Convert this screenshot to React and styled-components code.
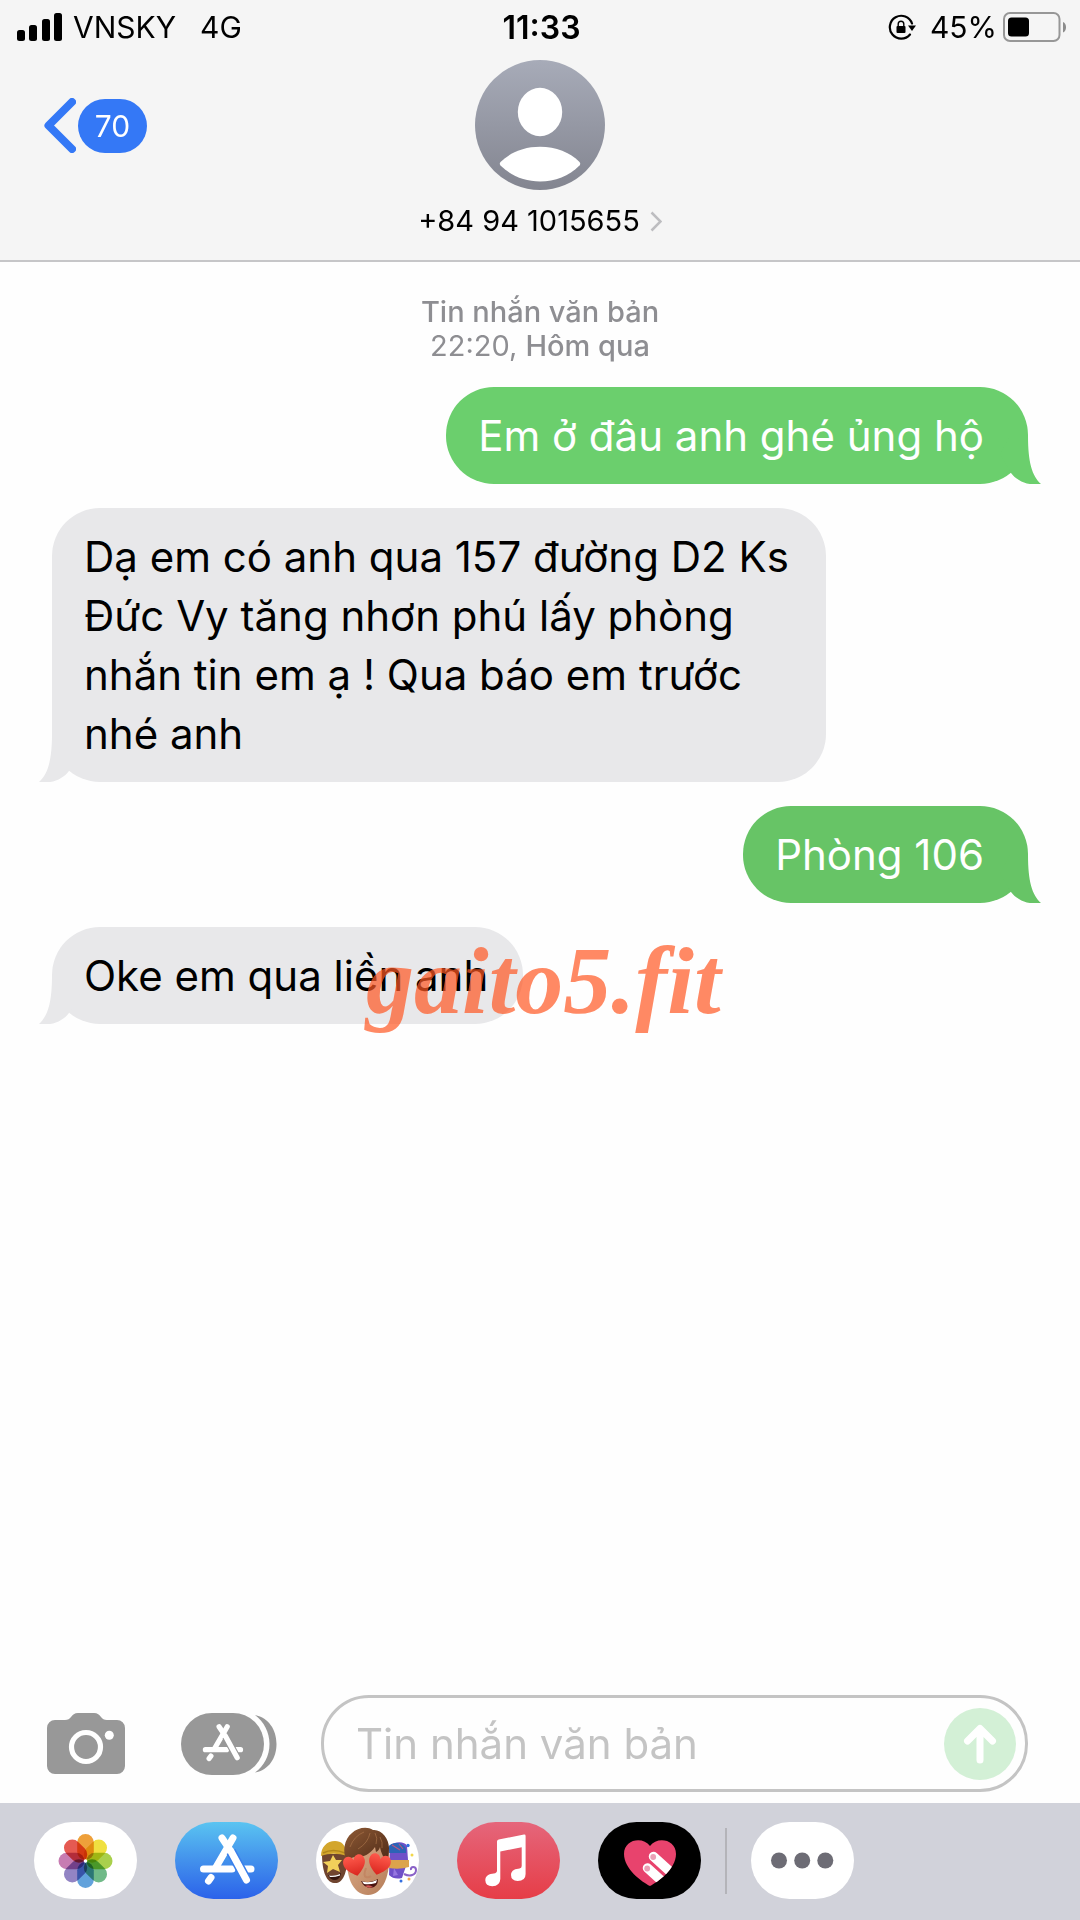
import React from 'react';
import styled, { createGlobalStyle } from 'styled-components';

const messages = [
  { id: 1, mine: true, color: '#6bcf6d', text: 'Em ở đâu anh ghé ủng hộ' },
  {
    id: 2,
    mine: false,
    color: '#e8e8ea',
    text: 'Dạ em có anh qua 157 đường D2 Ks Đức Vy tăng nhơn phú lấy phòng nhắn tin em ạ ! Qua báo em trước nhé anh',
  },
  { id: 3, mine: true, color: '#67c466', text: 'Phòng 106' },
  {
    id: 4,
    mine: false,
    color: '#e8e8ea',
    text: 'Oke em qua liền anh',
    watermark: 'gaito5.fit',
  },
];

const petals = [
  '#eea03a',
  '#f0e040',
  '#a9d04c',
  '#70ba88',
  '#62a2dc',
  '#9284c4',
  '#c77cb2',
  '#e55a52',
];

const SignalIcon = () => (
  <svg width="46" height="28" viewBox="0 0 46 28" aria-hidden="true">
    <rect x="0" y="17" width="8" height="11" rx="2.5" />
    <rect x="12" y="12" width="8" height="16" rx="2.5" />
    <rect x="25" y="6" width="8" height="22" rx="2.5" />
    <rect x="37" y="0" width="8" height="28" rx="2.5" />
  </svg>
);

const RotationLockIcon = () => (
  <svg width="28" height="26" viewBox="0 0 28 26" aria-hidden="true">
    <path
      d="M24 9.5A11.4 11.4 0 1 0 22 20.5"
      fill="none"
      stroke="#000"
      strokeWidth="2.2"
      strokeLinecap="round"
    />
    <path d="M20 11.5h8l-4 5.5z" />
    <rect x="8.5" y="12" width="9" height="7" rx="1" />
    <path d="M10.2 12.5V10a2.8 2.8 0 0 1 5.6 0v2.5" fill="none" stroke="#000" strokeWidth="1.4" />
  </svg>
);

const BatteryIcon = () => (
  <svg width="63" height="30" viewBox="0 0 63 30" aria-hidden="true">
    <rect x="1" y="1" width="55.5" height="28" rx="6" fill="none" stroke="#979797" strokeWidth="2" />
    <rect x="5" y="5.5" width="21" height="19" rx="3.5" />
    <path d="M60 10c4 1.5 4 9 0 10.5z" fill="#8c8c8c" />
  </svg>
);

const AvatarIcon = () => (
  <svg width="130" height="130" viewBox="0 0 130 130" aria-hidden="true">
    <defs>
      <linearGradient id="avatar" x1="0" y1="0" x2="0" y2="1">
        <stop offset="0" stopColor="#a7abb8" />
        <stop offset="1" stopColor="#838590" />
      </linearGradient>
    </defs>
    <circle cx="65" cy="65" r="65" fill="url(#avatar)" />
    <ellipse cx="65" cy="52" rx="22.2" ry="24.2" fill="#fff" />
    <path
      d="M25.5 102C35 92.5 49 86.800 65 86.800s30 5.700 39.500 15.200q1.500 1.800 0 3.500C94 116 80 121.500 65 121.500s-29-5.500-39.500-16q-1.500-1.700 0-3.500z"
      fill="#fff"
    />
  </svg>
);

const CameraIcon = () => (
  <svg width="78" height="61" viewBox="0 0 78 61" aria-hidden="true">
    <path
      d="M8 7h10c3 0 4.500-1 6-3s3.500-4 7-4h16c3.500 0 5.500 2 7 4s3 3 6 3h10a8 8 0 0 1 8 8v38a8 8 0 0 1-8 8H8a8 8 0 0 1-8-8V15a8 8 0 0 1 8-8z"
      fill="#989898"
    />
    <circle cx="39" cy="34" r="14.5" fill="none" stroke="#fff" strokeWidth="5.2" />
    <circle cx="62.3" cy="22.3" r="4.5" fill="#fff" />
  </svg>
);

const StoreGlyph = ({ background }) => (
  <g fill="none" stroke="#fff" strokeWidth="7" strokeLinecap="round">
    <path d="M28.5 47H57M70 47h6" />
    <path d="M47 16l6 9" />
    <path d="M58 16L40.5 46" />
    <path d="M36 55.5L33.5 59" />
    <path d="M56 29.5L71.5 58" stroke={background} strokeWidth="10" strokeLinecap="butt" />
    <path d="M55.5 28.5L71.5 58" />
  </g>
);

const AppsIcon = () => (
  <svg width="96" height="62" viewBox="0 0 96 62" aria-hidden="true">
    <path d="M74 2C88 5 95.5 17 95.5 31S88 57 74 59.5C83 53 88.5 43 88.5 31S83 9 74 2z" fill="#989898" />
    <rect width="83" height="62" rx="31" fill="#989898" />
    <g transform="translate(42 36.7) scale(.74) translate(-52.3 -47)">
      <StoreGlyph background="#989898" />
    </g>
  </svg>
);

const PhotosIcon = () => (
  <svg width="103" height="77" viewBox="0 0 103 77" aria-hidden="true">
    <rect width="103" height="77" fill="#fff" />
    {petals.map((color, i) => (
      <rect
        key={color}
        x="43.2"
        y="12"
        width="16.6"
        height="26"
        rx="8.3"
        fill={color}
        transform={`rotate(${i * 45} 51.5 39)`}
        style={{ mixBlendMode: 'multiply' }}
      />
    ))}
    <circle cx="51.5" cy="39" r="1.7" fill="#fff" />
  </svg>
);

const StoreIcon = () => (
  <svg width="103" height="77" viewBox="0 0 103 77" aria-hidden="true">
    <defs>
      <linearGradient id="store" x1="0" y1="0" x2="0" y2="1">
        <stop offset="0" stopColor="#5ac4f1" />
        <stop offset=".5" stopColor="#4391ec" />
        <stop offset="1" stopColor="#2b62ea" />
      </linearGradient>
    </defs>
    <rect width="103" height="77" fill="url(#store)" />
    <StoreGlyph background="#3b7feb" />
  </svg>
);

const heartPath = 'M0 10C-6 6-11 1-11-4c0-8 9-9 11-2 2-7 11-6 11 2C11 1 6 6 0 10z';

const MemojiIcon = () => (
  <svg width="103" height="77" viewBox="0 0 103 77" aria-hidden="true">
    <defs>
      <linearGradient id="skin" x1="0" y1="0" x2="1" y2="1">
        <stop offset="0" stopColor="#dfae8a" />
        <stop offset="1" stopColor="#b47c58" />
      </linearGradient>
      <linearGradient id="hair" x1="0" y1="0" x2="1" y2="1">
        <stop offset="0" stopColor="#8e5a35" />
        <stop offset="1" stopColor="#4e2a17" />
      </linearGradient>
      <linearGradient id="hearts" x1="0" y1="0" x2="0" y2="1">
        <stop offset="0" stopColor="#ff5a4c" />
        <stop offset="1" stopColor="#d9261f" />
      </linearGradient>
    </defs>
    <rect width="103" height="77" fill="#fff" />
    <path d="M6 32c0 14 3 28 12 29 8 1 13-7 14-29z" fill="#70452f" />
    <path d="M5 34c0-9 6-15 14-15 6 0 11 3 12 15-9-3-18-3-26 0z" fill="#d3a62d" />
    <path d="M7 31q10-5 22 0" fill="none" stroke="#b1861c" strokeWidth="1.5" />
    <path d="M17 33l3 5 6 0-4 5 2 7-7-3-6 4 1-7-5-4 7-1z" fill="#f2d05a" />
    <path d="M12 53q7 2 13-2-1 7-6 7t-7-5z" fill="#33150f" />
    <path d="M13 53.5q6 1 11-1.5v1.5q-6 2-10 1.5z" fill="#fff" />
    <path d="M74 24c4-5 15-5 17 0l1 14-6 18q-8 2-13-3z" fill="#6f50c8" />
    <path d="M72 25c4-6 15-5 18 2v4H73z" fill="#2c63b6" />
    <path d="M76 23l8 5M83 22l4 5" stroke="#b85683" strokeWidth="1.2" />
    <path d="M73 38h20v7q-10 3-20 1z" fill="#dca44b" />
    <path d="M78 46l4 7-5 1z" fill="#9677e0" />
    <path d="M88 52c6 3 12 1 12-4 0-4-6-4-5 0" fill="none" stroke="#8a62c7" strokeWidth="2" />
    <circle cx="92" cy="23.5" r="1.7" fill="#336fe0" />
    <circle cx="96" cy="33" r="1.5" fill="#f2d74b" />
    <circle cx="85" cy="59" r="1.5" fill="#336fe0" />
    <circle cx="93" cy="57" r="1.5" fill="#f2a94b" />
    <path d="M31 28c-2 25 5 45 21 45 15 0 23-20 21-45-9-12-34-12-42 0z" fill="url(#skin)" />
    <path
      d="M31 40C26 30 28 17 36 11c5-5 15-7 21-3 8-1 16 8 16 18 0 6-1 10-2 13-3-2-6-8-7-14-1 3-2 4-4 5l-1-5c-5 7-11 10-18 10-5 0-8 2-10 5z"
      fill="url(#hair)"
    />
    <path
      d="M34 25q4-11 14-15M42 27q10-6 12-16M60 22q2-6-1-11M66 26q1-6-2-11"
      fill="none"
      stroke="#b07a4e"
      strokeOpacity=".6"
    />
    <path d="M50 46q-3 8 0 9 3 1 5-1" fill="none" stroke="#c28663" strokeWidth="2" />
    <g transform="translate(39 44) rotate(-14)">
      <path d={heartPath} fill="url(#hearts)" />
    </g>
    <g transform="translate(63 43) rotate(14)">
      <path d={heartPath} fill="url(#hearts)" />
    </g>
    <path d="M45 59q9 3 17-2 0 8-7 9-7 0-10-7z" fill="#4b140f" />
    <path d="M46 59.5q8 2 15-1.5l-1 3q-7 2-12 1z" fill="#fff" />
    <path d="M49 64q4-2 8 1-4 2-8-1z" fill="#d45655" />
  </svg>
);

const MusicIcon = () => (
  <svg width="103" height="77" viewBox="0 0 103 77" aria-hidden="true">
    <defs>
      <linearGradient id="music" x1="0" y1="0" x2="0" y2="1">
        <stop offset="0" stopColor="#e5667b" />
        <stop offset="1" stopColor="#e63d47" />
      </linearGradient>
    </defs>
    <rect width="103" height="77" fill="url(#music)" />
    <path
      d="M40 19.5q0-1.700 1.700-2.100L67 12.600q1.600-.3 1.600 1.400V52q0 7-8 7-6.500-.3-6.600-6c0-5 5-6.200 8.500-6.500q2.200-.3 2.200-2.500V25.200L43.300 29.600V57q-.3 7-8 7.200-6.800-.2-7-6c0-4.500 4-6.300 8.500-6.700q3.200-.3 3.200-3z"
      fill="#fff"
    />
  </svg>
);

const TouchIcon = () => (
  <svg width="103" height="77" viewBox="0 0 103 77" aria-hidden="true">
    <defs>
      <clipPath id="heart">
        <path d="M52 64C44 60 26 47 26 32c0-15 19-18 26-8 7-10 26-7 26 8 0 15-18 28-26 32z" />
      </clipPath>
    </defs>
    <rect width="103" height="77" fill="#000" />
    <g clipPath="url(#heart)">
      <rect width="103" height="77" fill="#e8436d" />
      <path
        d="M55.5 34.5l22 20M49.5 46l22 20"
        stroke="#fff"
        strokeWidth="9.5"
        strokeLinecap="round"
      />
      <circle cx="55.2" cy="35" r="2.9" fill="#eba0b6" />
      <circle cx="49.2" cy="46.5" r="2.9" fill="#eba0b6" />
    </g>
  </svg>
);

const MoreIcon = () => (
  <svg width="103" height="77" viewBox="0 0 103 77" aria-hidden="true">
    <rect width="103" height="77" fill="#fff" />
    <g fill="#6d6c75">
      <circle cx="28" cy="38.5" r="8" />
      <circle cx="51.2" cy="38.5" r="8" />
      <circle cx="74.3" cy="38.5" r="8" />
    </g>
  </svg>
);

const apps = [
  { label: 'Ảnh', Icon: PhotosIcon },
  { label: 'App Store', Icon: StoreIcon },
  { label: 'Memoji', Icon: MemojiIcon },
  { label: 'Nhạc', Icon: MusicIcon },
  { label: 'Digital Touch', Icon: TouchIcon },
];

const App = () => {
  return (
    <Screen>
      <GlobalStyle />
      <Header>
        <StatusBar>
          <StatusGroup>
            <SignalIcon />
            <Carrier>VNSKY</Carrier>
            <span>4G</span>
          </StatusGroup>
          <Clock>11:33</Clock>
          <StatusGroup $end>
            <RotationLockIcon />
            <BatteryLevel>45%</BatteryLevel>
            <BatteryIcon />
          </StatusGroup>
        </StatusBar>
        <Nav>
          <BackButton aria-label="Quay lại, 70 tin nhắn">
            <svg width="32" height="55" viewBox="0 0 32 55" aria-hidden="true">
              <path
                d="M28 4L4.500 27.500 28 51"
                fill="none"
                stroke="#3478f6"
                strokeWidth="8"
                strokeLinecap="round"
                strokeLinejoin="round"
              />
            </svg>
            <Badge>70</Badge>
          </BackButton>
          <Contact>
            <AvatarIcon />
            <ContactName>
              +84 94 1015655
              <svg width="12" height="21" viewBox="0 0 12 21" aria-hidden="true">
                <path d="M1.500 1.500l9 9-9 9" fill="none" stroke="#bdbdc0" strokeWidth="2.5" />
              </svg>
            </ContactName>
          </Contact>
        </Nav>
      </Header>

      <Thread>
        <Stamp>
          <strong>Tin nhắn văn bản</strong>
          <div>
            22:20, <strong>Hôm qua</strong>
          </div>
        </Stamp>
        {messages.map(({ id, mine, color, text, watermark }) => (
          <Bubble key={id} $mine={mine} $color={color}>
            {text}
            <Tail $mine={mine} viewBox="0 -8 42 48" aria-hidden="true">
              <path d="M28-8C28 18 32 32 41 40 28 42 17 37 11 29L0 10 10-8z" fill={color} />
            </Tail>
            {watermark && <Watermark>{watermark}</Watermark>}
          </Bubble>
        ))}
      </Thread>

      <Composer>
        <IconButton aria-label="Máy ảnh">
          <CameraIcon />
        </IconButton>
        <IconButton $gap="56px" aria-label="Ứng dụng">
          <AppsIcon />
        </IconButton>
        <Field>
          <Input type="text" placeholder="Tin nhắn văn bản" aria-label="Tin nhắn văn bản" />
          <SendButton aria-label="Gửi">
            <svg width="34" height="40" viewBox="0 0 34 40" aria-hidden="true">
              <path
                d="M17 36V5M4.500 17L17 4.500 29.500 17"
                fill="none"
                stroke="#fff"
                strokeWidth="7"
                strokeLinecap="round"
                strokeLinejoin="round"
              />
            </svg>
          </SendButton>
        </Field>
      </Composer>

      <Dock>
        {apps.map(({ label, Icon }) => (
          <DockButton key={label} aria-label={label}>
            <Icon />
          </DockButton>
        ))}
        <Divider />
        <DockButton aria-label="Thêm">
          <MoreIcon />
        </DockButton>
      </Dock>
    </Screen>
  );
};

const GlobalStyle = createGlobalStyle`
  * {
    box-sizing: border-box;
  }
  body {
    margin: 0;
    background: #fefefe;
    color: #000;
    font-family: Inter, "Liberation Sans", sans-serif;
  }
  button {
    border: 0;
    padding: 0;
    background: none;
    font: inherit;
    cursor: pointer;
  }
  svg {
    display: block;
    flex: none;
  }
`;

const Screen = styled.div`
  display: flex;
  flex-direction: column;
  min-height: 100vh;
`;

const Header = styled.header`
  background: #f5f5f5;
  border-bottom: 2px solid #c6c6c8;
`;

const StatusBar = styled.div`
  display: grid;
  grid-template-columns: 1fr auto 1fr;
  align-items: center;
  height: 54px;
  padding: 0 14px 0 17px;
  font-size: 30px;
`;

const StatusGroup = styled.div`
  display: flex;
  align-items: center;
  justify-content: ${({ $end }) => ($end ? 'flex-end' : 'flex-start')};
`;

const Carrier = styled.span`
  margin: 0 24px 0 10px;
`;

const Clock = styled.time`
  font-size: 32px;
  font-weight: 600;
`;

const BatteryLevel = styled.span`
  margin: 0 6px 0 14px;
`;

const Nav = styled.nav`
  display: grid;
  grid-template-columns: 1fr auto 1fr;
  padding: 6px 44px 22px;
`;

const BackButton = styled.button`
  display: flex;
  align-items: center;
  justify-self: start;
  align-self: start;
  gap: 2px;
  margin-top: 38px;
`;

const Badge = styled.span`
  width: 69px;
  border-radius: 27px;
  background: #3478f6;
  color: #fff;
  font-size: 30px;
  line-height: 54px;
  text-align: center;
`;

const Contact = styled.button`
  display: flex;
  flex-direction: column;
  align-items: center;
  gap: 14px;
`;

const ContactName = styled.span`
  display: flex;
  align-items: center;
  gap: 10px;
  font-size: 29px;
  line-height: 34px;
`;

const Thread = styled.main`
  display: flex;
  flex: 1;
  flex-direction: column;
  align-items: flex-start;
  gap: 24px;
  padding: 33px 52px;
`;

const Stamp = styled.div`
  align-self: center;
  color: #8e8e92;
  font-size: 29px;
  line-height: 34px;
  text-align: center;

  strong {
    font-weight: 500;
  }
`;

const Bubble = styled.div`
  position: relative;
  align-self: ${({ $mine }) => ($mine ? 'flex-end' : 'flex-start')};
  max-width: calc(100% - 202px);
  padding: 19px ${({ $mine }) => ($mine ? '44px' : '35px')} 19px 32px;
  border-radius: 48px;
  background: ${({ $color }) => $color};
  color: ${({ $mine }) => ($mine ? '#fff' : '#000')};
  font-size: 42px;
  line-height: 59px;
`;

const Tail = styled.svg`
  position: absolute;
  bottom: 0;
  width: 42px;
  height: 48px;
  ${({ $mine }) => ($mine ? 'right: -14px;' : 'left: -14px; transform: scaleX(-1);')}
`;

const Watermark = styled.span`
  position: absolute;
  top: 0;
  left: 314px;
  color: rgba(255, 87, 34, 0.7);
  font-family: "Liberation Serif", serif;
  font-size: 96px;
  font-style: italic;
  font-weight: 700;
  line-height: 108px;
`;

const Composer = styled.form`
  display: flex;
  align-items: center;
  padding: 10px 52px 11px 47px;
`;

const IconButton = styled.button.attrs({ type: 'button' })`
  flex: none;
  margin-left: ${({ $gap }) => $gap || 0};
`;

const Field = styled.div`
  display: flex;
  flex: 1;
  align-items: center;
  min-width: 0;
  height: 97px;
  margin-left: 44px;
  padding: 0 9px 0 32px;
  border: 3px solid #c4c4c4;
  border-radius: 48px;
`;

const Input = styled.input`
  flex: 1;
  min-width: 0;
  border: 0;
  padding: 0;
  outline: 0;
  background: none;
  font-family: inherit;
  font-size: 42px;
  line-height: 59px;

  &::placeholder {
    color: #c4c4c4;
    opacity: 1;
  }
`;

const SendButton = styled.button.attrs({ type: 'button' })`
  display: grid;
  flex: none;
  place-items: center;
  width: 72px;
  height: 72px;
  border-radius: 50%;
  background: #d3f0d6;
`;

const Dock = styled.footer`
  display: flex;
  align-items: center;
  gap: 38px;
  padding: 19px 34px 21px;
  background: #d1d2da;
`;

const DockButton = styled.button`
  overflow: hidden;
  border-radius: 39px;
`;

const Divider = styled.span`
  width: 2px;
  height: 66px;
  margin: 0 -14px;
  background: #b4b4b9;
`;

export default App;
